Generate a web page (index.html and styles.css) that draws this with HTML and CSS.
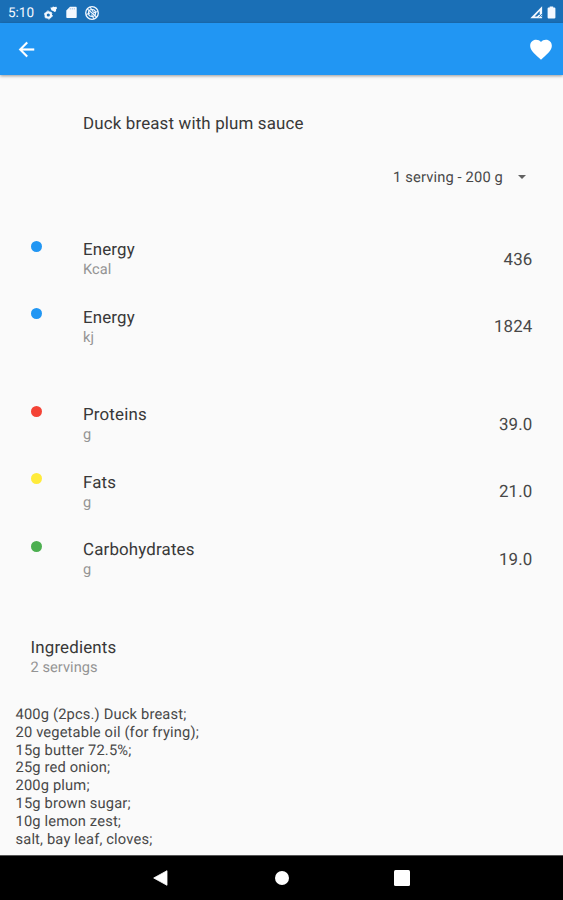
FILE: index.html
```html
<!DOCTYPE html>
<html lang="en">
<head>
<meta charset="utf-8">
<title>Duck breast with plum sauce</title>
<link rel="stylesheet" href="styles.css">
</head>
<body>
<div class="status">
  <span class="time">5:10</span>
  <svg class="gears" width="14" height="14" viewBox="0 0 14 14"><circle cx="4.300" cy="9" r="2.700" fill="none" stroke="currentColor" stroke-width="2.200"/><circle cx="4.300" cy="9" r="4" fill="none" stroke="currentColor" stroke-width=".9" stroke-dasharray="2.100 2.090"/><path d="M6.400 1.400h1.800L9 .4l1.400.7 2-.4.700 1.500-1.100 1.300.1 1.800-1.600.8-1.300-1.200-1.600-.4-.6-1.300z" fill="currentColor"/></svg>
  <svg class="card" width="11" height="13" viewBox="0 0 11 13"><path d="M4 .8h5.600c.7 0 1.100.4 1.100 1.100v9c0 .7-.4 1.100-1.100 1.100H1.400C.7 12 .3 11.600.3 10.900V4.500z" fill="currentColor"/><path d="M4.300 2v1.500M6.300 2v1.500M8.300 2v1.500" stroke="#8bb5dc" stroke-width=".7"/></svg>
  <svg class="globe" width="16" height="16" viewBox="0 0 16 16" fill="none" stroke="currentColor"><circle cx="8" cy="8" r="6.300" stroke-width="1.300"/><circle cx="8" cy="8" r="3.500" stroke-width="1.200"/><path d="M3.500 4.200l9 7.800M6 2l3.300 5M13.800 6.500L9 8M10 14L7.500 9.500M2.200 9.500L6 8" stroke-width="1.100"/></svg>
  <svg class="signal" width="14" height="13" viewBox="0 0 14 13"><path d="M12.100.3v11.900H.3z" fill="currentColor"/><path d="M9.700 5v3L7 10.600H4.600z" fill="#1b6fb5"/><path d="M9 7.800l3.200 3.500M12.200 7.800L9 11.300" stroke="#1b6fb5" stroke-width=".8"/></svg>
  <svg class="battery" width="9" height="13" viewBox="0 0 9 13"><path d="M2.700.4h3.500v1.200h1.300c.5 0 .9.400.9.900v9c0 .5-.4.900-.9.900h-6c-.5 0-.9-.4-.9-.9v-9c0-.5.400-.9.900-.9h1.200z" fill="currentColor"/></svg>
</div>
<header class="appbar">
  <svg class="back" width="23" height="23" viewBox="0 0 24 24"><path d="M20 11H7.830l5.590-5.590L12 4l-8 8 8 8 1.410-1.410L7.830 13H20v-2z" fill="currentColor" stroke="currentColor" stroke-width=".2"/></svg>
  <svg class="heart" width="27" height="27" viewBox="0 0 24 24"><path d="M12 21.350l-1.450-1.320C5.400 15.360 2 12.280 2 8.500 2 5.420 4.420 3 7.500 3c1.740 0 3.410.810 4.500 2.090C13.090 3.810 14.760 3 16.500 3 19.580 3 22 5.420 22 8.500c0 3.780-3.400 6.860-8.550 11.540L12 21.350z" fill="currentColor"/></svg>
</header>
<main class="content">
  <h1 class="title">Duck breast with plum sauce</h1>
  <div class="select"><span>1 serving - 200 g</span><i class="caret"></i></div>
  <section class="group">
    <div class="row"><i class="dot blue"></i><div class="label"><b>Energy</b><small>Kcal</small></div><span class="value">436</span></div>
    <div class="row"><i class="dot blue"></i><div class="label"><b>Energy</b><small>kj</small></div><span class="value">1824</span></div>
  </section>
  <section class="group">
    <div class="row"><i class="dot red"></i><div class="label"><b>Proteins</b><small>g</small></div><span class="value">39.0</span></div>
    <div class="row"><i class="dot yellow"></i><div class="label"><b>Fats</b><small>g</small></div><span class="value">21.0</span></div>
    <div class="row"><i class="dot green"></i><div class="label"><b>Carbohydrates</b><small>g</small></div><span class="value">19.0</span></div>
  </section>
  <div class="row"><div class="label"><b>Ingredients</b><small>2 servings</small></div></div>
  <div class="ingredients">
    <div>400g (2pcs.) Duck breast;</div>
    <div>20 vegetable oil (for frying);</div>
    <div>15g butter 72.5%;</div>
    <div>25g red onion;</div>
    <div>200g plum;</div>
    <div>15g brown sugar;</div>
    <div>10g lemon zest;</div>
    <div>salt, bay leaf, cloves;</div>
  </div>
</main>
<nav class="nav">
  <svg width="16" height="18" viewBox="0 0 16 18"><path d="M15 1.700v14.600L1.700 9z" fill="#fff" stroke="#fff" stroke-width=".8" stroke-linejoin="round"/></svg>
  <i class="home"></i>
  <i class="recent"></i>
</nav>
</body>
</html>
```
FILE: styles.css
```css
* { box-sizing: border-box; }
body {
  margin: 0;
  width: 563px;
  height: 900px;
  display: flex;
  flex-direction: column;
  overflow: hidden;
  background: #fafafa;
  color: #383838;
  font-family: Roboto, "Liberation Sans", sans-serif;
  text-rendering: geometricPrecision;
}
svg { display: block; flex: none; }
.status {
  height: 23px;
  flex: none;
  display: flex;
  align-items: center;
  padding: 2px 7px 0 8px;
  background: #1a6fb6;
  color: #f4f9ff;
}
.time { width: 36px; font-size: 13.500px; line-height: 20px; }
.card { margin-left: 8px; }
.globe { margin-left: 7px; }
.signal { margin-left: auto; }
.battery { margin-left: 3px; }
.appbar {
  height: 52px;
  flex: none;
  display: flex;
  align-items: center;
  justify-content: space-between;
  padding: 0 9px 0 15px;
  background: #2196f3;
  color: #fff;
  box-shadow: 0 1px 3px rgba(0, 0, 0, .4);
  z-index: 1;
}
.heart { width: 26px; }
.content { flex: 1; min-height: 0; }
.title {
  margin: 0;
  height: 71px;
  padding: 39px 0 0 83px;
  font-size: 16.900px;
  font-weight: 400;
  line-height: 20px;
  letter-spacing: .16px;
}
.select {
  height: 79px;
  padding: 21px 37px 0 0;
  display: flex;
  justify-content: flex-end;
  align-items: flex-start;
  font-size: 14.700px;
  line-height: 20px;
  letter-spacing: .15px;
  color: #484848;
}
.caret {
  margin: 8px 0 0 15px;
  border: 4.500px solid transparent;
  border-top-color: #616161;
  border-bottom: 0;
}
.group { margin-bottom: 30px; }
.row {
  height: 67.500px;
  display: flex;
  padding: 15px 30.500px 0 30.500px;
}
.dot { width: 11px; height: 11px; margin: .5px 41.500px 0 0; border-radius: 50%; flex: none; }
.blue { background: #2196f3; }
.red { background: #f44336; }
.yellow { background: #ffeb3b; }
.green { background: #4caf50; }
.label b, .label small { display: block; width: max-content; font-weight: 400; }
.label b { font-size: 16.900px; line-height: 20px; letter-spacing: .16px; }
.label small { font-size: 14.600px; line-height: 19px; letter-spacing: .05px; color: #949494; }
.value {
  margin: 9.500px 0 0 auto;
  font-size: 16.900px;
  line-height: 20px;
  letter-spacing: .16px;
  color: #484848;
}
.ingredients {
  padding: 16px 0 0 15.500px;
  font-size: 14.700px;
  line-height: 17.800px;
  letter-spacing: .16px;
  color: #484848;
}
.nav {
  height: 45px;
  flex: none;
  display: flex;
  align-items: center;
  padding-left: 152px;
  background: #000;
  border-top: 1px solid #555;
}
.home { width: 14px; height: 14px; margin-left: 107px; border-radius: 50%; background: #fff; }
.recent { width: 15.500px; height: 15.500px; margin-left: 105px; border-radius: 1.500px; background: #fff; }
```
